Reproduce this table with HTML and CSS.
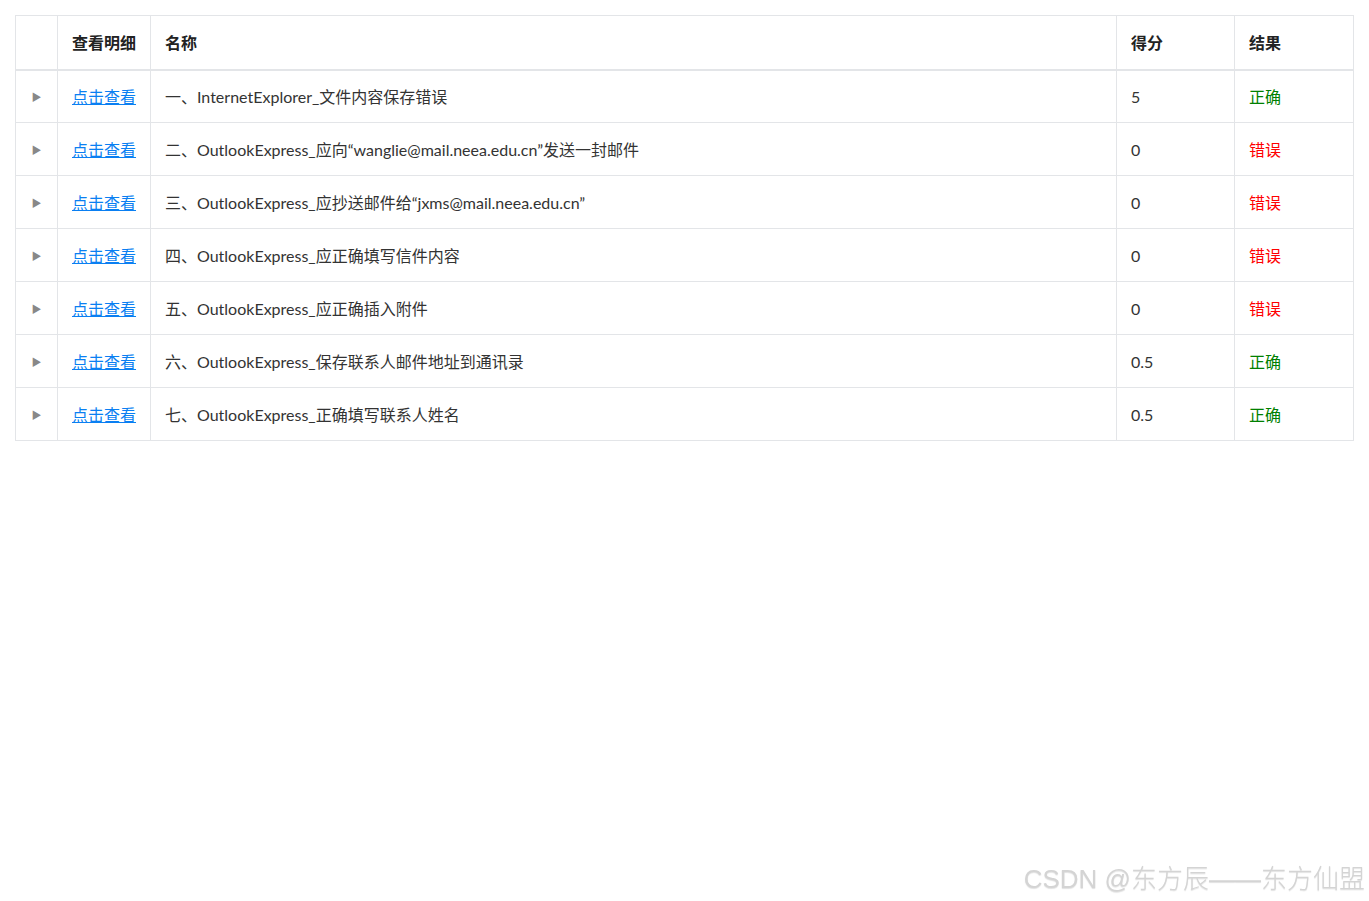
FILE: index.html
```html
<!DOCTYPE html>
<html lang="zh-CN">
<head>
    <meta charset="UTF-8">
    <meta name="viewport" content="width=device-width, initial-scale=1.0">
    <title>得分明细</title>
    <link rel="stylesheet" href="styles.css">
</head>
<body>
    <table class="score-table">
        <colgroup>
            <col class="col-toggle">
            <col class="col-detail">
            <col>
            <col class="col-score">
            <col class="col-result">
        </colgroup>
        <thead>
            <tr>
                <th></th>
                <th>查看明细</th>
                <th>名称</th>
                <th>得分</th>
                <th>结果</th>
            </tr>
        </thead>
        <tbody>
            <tr>
                <td class="toggle">&#9654;</td>
                <td><a href="#">点击查看</a></td>
                <td>一、InternetExplorer_文件内容保存错误</td>
                <td>5</td>
                <td class="ok">正确</td>
            </tr>
            <tr>
                <td class="toggle">&#9654;</td>
                <td><a href="#">点击查看</a></td>
                <td>二、OutlookExpress_应向“wanglie@mail.neea.edu.cn”发送一封邮件</td>
                <td>0</td>
                <td class="bad">错误</td>
            </tr>
            <tr>
                <td class="toggle">&#9654;</td>
                <td><a href="#">点击查看</a></td>
                <td>三、OutlookExpress_应抄送邮件给“jxms@mail.neea.edu.cn”</td>
                <td>0</td>
                <td class="bad">错误</td>
            </tr>
            <tr>
                <td class="toggle">&#9654;</td>
                <td><a href="#">点击查看</a></td>
                <td>四、OutlookExpress_应正确填写信件内容</td>
                <td>0</td>
                <td class="bad">错误</td>
            </tr>
            <tr>
                <td class="toggle">&#9654;</td>
                <td><a href="#">点击查看</a></td>
                <td>五、OutlookExpress_应正确插入附件</td>
                <td>0</td>
                <td class="bad">错误</td>
            </tr>
            <tr>
                <td class="toggle">&#9654;</td>
                <td><a href="#">点击查看</a></td>
                <td>六、OutlookExpress_保存联系人邮件地址到通讯录</td>
                <td>0.5</td>
                <td class="ok">正确</td>
            </tr>
            <tr>
                <td class="toggle">&#9654;</td>
                <td><a href="#">点击查看</a></td>
                <td>七、OutlookExpress_正确填写联系人姓名</td>
                <td>0.5</td>
                <td class="ok">正确</td>
            </tr>
        </tbody>
    </table>

    <div class="watermark">CSDN @东方辰——东方仙盟</div>
</body>
</html>
```
FILE: styles.css
```css
* {
    box-sizing: border-box;
}

body {
    margin: 15px;
    font-family: Lato, "Noto Sans CJK SC", sans-serif;
    font-size: 16px;
    color: #333;
    background-color: #fff;
}

.score-table {
    width: 100%;
    table-layout: fixed;
    border-collapse: collapse;
}

.col-toggle {
    width: 42px;
}

.col-detail {
    width: 93px;
}

.col-score {
    width: 118px;
}

.col-result {
    width: 119px;
}

.score-table th,
.score-table td {
    height: 53px;
    padding: 0 14px;
    border: 1px solid #e3e5e8;
    text-align: left;
    vertical-align: middle;
    white-space: nowrap;
}

.score-table th {
    height: 54px;
    font-weight: bold;
    color: #222;
    border-bottom: 2px solid #e3e5e8;
}

.score-table td.toggle {
    padding: 0;
    text-align: center;
    font-size: 10px;
    color: #888;
}

.score-table a {
    color: #0a7ff2;
    text-decoration: underline;
}

.ok {
    color: #008000;
}

.bad {
    color: #ff0000;
}

.watermark {
    position: fixed;
    right: 4px;
    bottom: 6px;
    font-family: "Liberation Sans", "Noto Sans CJK SC", sans-serif;
    font-size: 26px;
    font-weight: 300;
    color: #d4d4d4;
    text-shadow: 0 1px 1px rgba(0, 0, 0, 0.12);
}
```
